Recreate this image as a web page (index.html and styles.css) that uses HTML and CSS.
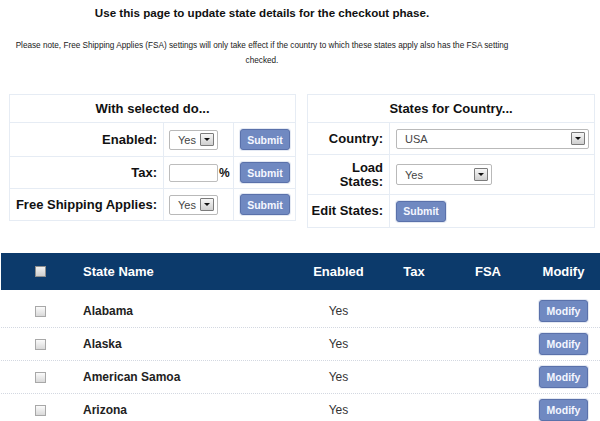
FILE: index.html
```html
<!DOCTYPE html>
<html>
<head>
<meta charset="utf-8">
<title>States</title>
<link rel="stylesheet" href="styles.css">
</head>
<body>
<div class="intro">
  <h1 class="title">Use this page to update state details for the checkout phase.</h1>
  <p class="note">Please note, Free Shipping Applies (FSA) settings will only take effect if the country to which these states apply also has the FSA setting<br>checked.</p>
</div>

<div class="panels">
  <table class="panel panel-left">
    <colgroup><col class="c-l1"><col class="c-l2"><col class="c-l3"></colgroup>
    <tr class="head"><th colspan="3">With selected do...</th></tr>
    <tr class="row-a">
      <td class="lbl">Enabled:</td>
      <td class="ctl"><span class="select sel-small"><span class="val">Yes</span><span class="arrow"></span></span></td>
      <td class="act"><button class="btn">Submit</button></td>
    </tr>
    <tr class="row-b">
      <td class="lbl">Tax:</td>
      <td class="ctl"><span class="tax"><input class="tax-input" type="text"><span class="pct">%</span></span></td>
      <td class="act"><button class="btn">Submit</button></td>
    </tr>
    <tr class="row-b">
      <td class="lbl">Free Shipping Applies:</td>
      <td class="ctl"><span class="select sel-small"><span class="val">Yes</span><span class="arrow"></span></span></td>
      <td class="act"><button class="btn">Submit</button></td>
    </tr>
  </table>

  <table class="panel panel-right">
    <colgroup><col class="c-r1"><col class="c-r2"></colgroup>
    <tr class="head"><th colspan="2">States for Country...</th></tr>
    <tr class="row-c">
      <td class="lbl">Country:</td>
      <td class="ctl"><span class="select sel-country"><span class="val">USA</span><span class="arrow"></span></span></td>
    </tr>
    <tr class="row-d">
      <td class="lbl">Load<br>States:</td>
      <td class="ctl"><span class="select sel-load"><span class="val">Yes</span><span class="arrow"></span></span></td>
    </tr>
    <tr class="row-e">
      <td class="lbl">Edit States:</td>
      <td class="ctl"><button class="btn">Submit</button></td>
    </tr>
  </table>
</div>

<div class="states">
  <div class="states-head">
    <div class="cell cb"><span class="check check-head"></span></div>
    <div class="cell name">State Name</div>
    <div class="cell mid">Enabled</div>
    <div class="cell mid">Tax</div>
    <div class="cell mid">FSA</div>
    <div class="cell mod">Modify</div>
  </div>
  <div class="states-body">
    <div class="state-row">
      <div class="cell cb"><span class="check"></span></div>
      <div class="cell name">Alabama</div>
      <div class="cell mid val-yes">Yes</div>
      <div class="cell mid"></div>
      <div class="cell mid"></div>
      <div class="cell mod"><button class="btn btn-mod">Modify</button></div>
    </div>
    <div class="state-row">
      <div class="cell cb"><span class="check"></span></div>
      <div class="cell name">Alaska</div>
      <div class="cell mid val-yes">Yes</div>
      <div class="cell mid"></div>
      <div class="cell mid"></div>
      <div class="cell mod"><button class="btn btn-mod">Modify</button></div>
    </div>
    <div class="state-row">
      <div class="cell cb"><span class="check"></span></div>
      <div class="cell name">American Samoa</div>
      <div class="cell mid val-yes">Yes</div>
      <div class="cell mid"></div>
      <div class="cell mid"></div>
      <div class="cell mod"><button class="btn btn-mod">Modify</button></div>
    </div>
    <div class="state-row">
      <div class="cell cb"><span class="check"></span></div>
      <div class="cell name">Arizona</div>
      <div class="cell mid val-yes">Yes</div>
      <div class="cell mid"></div>
      <div class="cell mid"></div>
      <div class="cell mod"><button class="btn btn-mod">Modify</button></div>
    </div>
  </div>
</div>
</body>
</html>
```

FILE: styles.css
```css
html, body {
  margin: 0;
  padding: 0;
  background: #ffffff;
}
body {
  font-family: "Liberation Sans", Arial, Helvetica, sans-serif;
  color: #111;
  overflow: hidden;
}

.intro {
  width: 524px;
  text-align: center;
}
.title {
  margin: 5px 0 0;
  font-size: 11.6px;
  line-height: 16px;
  font-weight: bold;
  color: #111;
}
.note {
  margin: 17px 0 0;
  font-size: 8.2px;
  line-height: 15px;
  color: #1a1a1a;
}

.panels {
  display: flex;
  align-items: flex-start;
  gap: 11px;
  padding-left: 9px;
  margin-top: 26px;
}
.panel {
  border-collapse: collapse;
  table-layout: fixed;
  width: 287px;
  border: 1px solid #e6ecf4;
}
.panel td, .panel th {
  border: 1px solid #e6ecf4;
  padding: 0;
  vertical-align: middle;
}
.panel th {
  font-size: 13px;
  font-weight: bold;
  color: #111;
  height: 27px;
  text-align: center;
}
.c-l1 { width: 154px; }
.c-l2 { width: 70px; }
.c-l3 { width: 62px; }
.c-r1 { width: 82px; }
.c-r2 { width: 205px; }

.row-a td { height: 33px; }
.row-b td { height: 31px; }
.row-c td { height: 31px; }
.row-d td { height: 39px; }
.row-e td { height: 32px; }

.lbl {
  text-align: right;
  padding-right: 6px !important;
  font-size: 13px;
  font-weight: bold;
  line-height: 14px;
  color: #111;
}
.panel-left .ctl { padding-left: 5px !important; }
.panel-right .ctl { padding-left: 6px !important; }
.act { padding-left: 6px !important; }

.select {
  display: flex;
  align-items: center;
  justify-content: space-between;
  box-sizing: border-box;
  height: 20px;
  border: 1px solid #b9b9b9;
  border-radius: 2px;
  background: #fff;
  padding: 0 3px 0 8px;
  font-size: 11px;
  color: #444;
}
.sel-small { width: 49px; }
.sel-country { width: 193px; }
.sel-load { width: 96px; height: 21px; }
.arrow {
  position: relative;
  box-sizing: border-box;
  width: 14px;
  height: 13px;
  border: 1px solid #7b7b7b;
  border-radius: 1px;
  background: linear-gradient(#f6f6f6, #cfcfcf);
}
.arrow::after {
  content: "";
  position: absolute;
  left: 3px;
  top: 4px;
  border-left: 3px solid transparent;
  border-right: 3px solid transparent;
  border-top: 3px solid #111;
}

.tax {
  display: flex;
  align-items: center;
}
.tax-input {
  box-sizing: border-box;
  width: 49px;
  height: 18px;
  margin: 0;
  border: 1px solid #bdbdbd;
  border-radius: 2px;
  padding: 0 2px;
  background: #fff;
}
.pct {
  margin-left: 1px;
  font-size: 12px;
  font-weight: bold;
  color: #111;
}

.btn {
  box-sizing: border-box;
  width: 50px;
  height: 21px;
  margin: 0;
  padding: 0;
  border: 1px solid #5a71aa;
  border-radius: 3px;
  background: #7089c1;
  color: #f4f7ff;
  font-family: "Liberation Sans", Arial, Helvetica, sans-serif;
  font-size: 10.5px;
  font-weight: bold;
  box-shadow: 0 0 0 1px #e4e9f3;
  display: block;
}
.btn-mod {
  width: 49px;
  height: 22px;
}

.states {
  margin-top: 25px;
  margin-left: 1px;
}
.states-head, .state-row {
  display: grid;
  grid-template-columns: 79px 210px 97px 54px 94px 65px;
  align-items: center;
}
.states-head {
  height: 37px;
  background: #0c3a6b;
  color: #fff;
  font-size: 13px;
  font-weight: bold;
}
.states-body {
  padding-top: 5px;
}
.state-row {
  height: 32px;
  border-bottom: 1px dotted #d3d8e1;
}
.cell.cb {
  display: flex;
  justify-content: center;
}
.cell.name {
  padding-left: 3px;
}
.state-row .name {
  font-size: 12px;
  font-weight: bold;
  color: #222;
}
.cell.mid {
  text-align: center;
}
.cell.mod {
  display: flex;
  justify-content: center;
  padding-right: 8px;
}
.val-yes {
  font-size: 12px;
  color: #333;
}
.check {
  display: block;
  box-sizing: border-box;
  width: 11px;
  height: 11px;
  border: 1px solid #a8a8a8;
  background: linear-gradient(#fbfbfb, #d9d9d9);
}
.check-head {
  border-color: #8e8e8e;
  background: linear-gradient(#f0f0f0, #cfcfcf);
}
```
